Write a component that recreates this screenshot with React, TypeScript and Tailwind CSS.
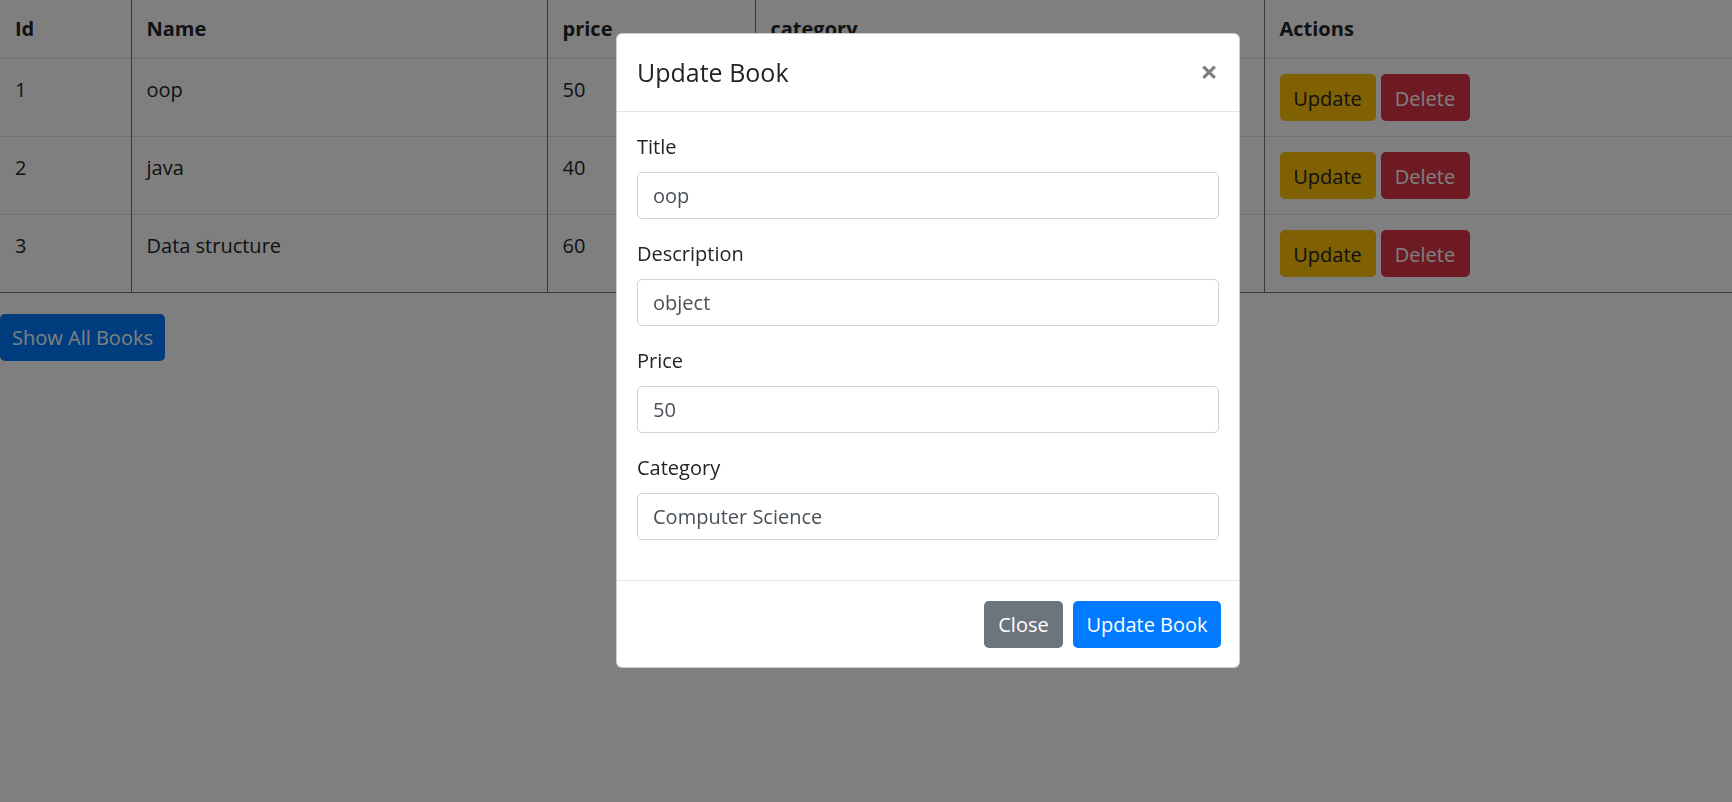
import React from "react";

const books = [
  { id: 1, name: "oop", price: 50, category: "Computer Science" },
  { id: 2, name: "java", price: 40, category: "Computer Science" },
  { id: 3, name: "Data structure", price: 60, category: "Computer Science" },
];

function Field({ label, value }: { label: string; value: string }) {
  return (
    <div className="mb-[20px]">
      <label className="block mb-[10px] text-[20px] leading-[30px] text-[#212529]">{label}</label>
      <input
        readOnly
        value={value}
        className="block w-full h-[47px] px-[15px] text-[20px] text-[#495057] bg-white border border-[#ced4da] rounded-[5px] outline-none"
      />
    </div>
  );
}

export default function App() {
  return (
    <div className="relative min-h-screen bg-white text-[#212529] font-['Open_Sans',sans-serif] text-[20px] leading-[30px]">
      <table className="w-full table-fixed border-collapse">
        <thead>
          <tr className="border-b border-[#dee2e6]">
            <th className="w-[131px] px-[15px] py-[14px] text-left font-bold border-r border-[#757575]">Id</th>
            <th className="w-[416px] px-[15px] py-[14px] text-left font-bold border-r border-[#757575]">Name</th>
            <th className="w-[208px] px-[15px] py-[14px] text-left font-bold border-r border-[#757575]">price</th>
            <th className="w-[509px] px-[15px] py-[14px] text-left font-bold border-r border-[#757575]">category</th>
            <th className="px-[15px] py-[14px] text-left font-bold">Actions</th>
          </tr>
        </thead>
        <tbody className="border-b border-[#757575]">
          {books.map((b, i) => (
            <tr key={b.id} className={i < books.length - 1 ? "border-b border-[#dee2e6]" : ""}>
              <td className="px-[15px] pt-[16px] pb-[14px] align-top border-r border-[#757575]">{b.id}</td>
              <td className="px-[15px] pt-[16px] pb-[14px] align-top border-r border-[#757575]">{b.name}</td>
              <td className="px-[15px] pt-[16px] pb-[14px] align-top border-r border-[#757575]">{b.price}</td>
              <td className="px-[15px] pt-[16px] pb-[14px] align-top border-r border-[#757575]">{b.category}</td>
              <td className="p-[15px] align-top">
                <div className="flex gap-[5px]">
                  <button className="w-[96px] h-[47px] pt-[2px] rounded-[5px] bg-[#ffc107] text-[#212529]">Update</button>
                  <button className="w-[89px] h-[47px] pt-[2px] rounded-[5px] bg-[#dc3545] text-white">Delete</button>
                </div>
              </td>
            </tr>
          ))}
        </tbody>
      </table>

      <button className="mt-[21px] w-[165px] h-[47px] rounded-[5px] bg-[#007bff] text-white">Show All Books</button>

      {/* backdrop */}
      <div className="fixed inset-0 bg-black/50" />

      {/* modal */}
      <div className="absolute left-[616px] top-[33px] w-[624px] bg-white border border-black/20 rounded-[6px]">
        <div className="flex items-start justify-between p-[20px] border-b border-[#dee2e6]">
          <h5 className="text-[25px] leading-[37px] font-medium text-[#212529]">Update Book</h5>
          <button className="text-[31px] leading-[34px] font-bold text-black/50 pr-[1px]">×</button>
        </div>
        <div className="px-[20px] pt-[20px]">
          <Field label="Title" value="oop" />
          <Field label="Description" value="object" />
          <Field label="Price" value="50" />
          <Field label="Category" value="Computer Science" />
          <div className="h-[20px]" />
        </div>
        <div className="flex justify-end gap-[10px] px-[18px] pt-[20px] pb-[19px] border-t border-[#dee2e6]">
          <button className="w-[79px] h-[47px] rounded-[5px] bg-[#6c757d] text-white">Close</button>
          <button className="w-[148px] h-[47px] rounded-[5px] bg-[#007bff] text-white">Update Book</button>
        </div>
      </div>
    </div>
  );
}
